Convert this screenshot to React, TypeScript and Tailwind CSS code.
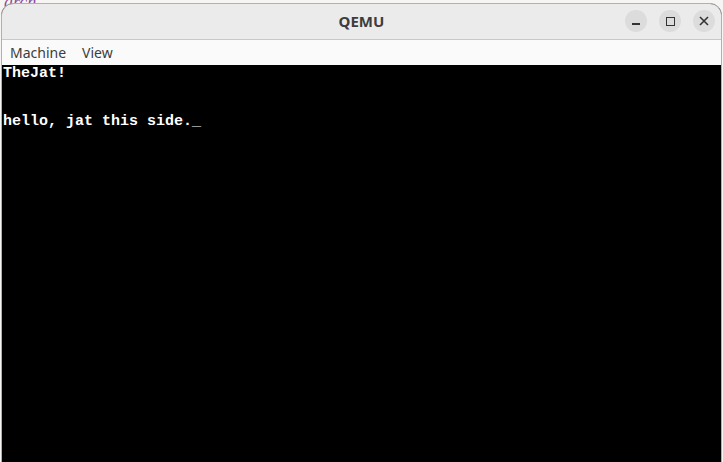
import React from "react";

export default function App() {
  return (
    <div className="relative w-[723px] h-[462px] overflow-hidden bg-[#f6f5f4]">
      <div
        className="absolute left-[4px] top-[-11px] text-[18px] italic text-[#8a4a9a]"
        style={{ fontFamily: '"Liberation Serif", serif' }}
      >
        arch
      </div>
      <div className="relative ml-[1px] mt-[3px] w-[721px] h-[470px] flex flex-col rounded-t-[12px] border border-[#b0b0b0] bg-black overflow-hidden">
        <div className="relative h-[36px] shrink-0 flex items-center justify-center bg-[#ebebeb] border-b border-[#c8c8c8]">
          <span
            className="text-[15px] font-bold text-[#3d3d3d]"
            style={{ fontFamily: '"Noto Sans", "Open Sans", sans-serif' }}
          >
            QEMU
          </span>
          <div className="absolute right-[6px] top-[6px] flex gap-[12px]">
            <div className="w-[22px] h-[22px] rounded-full bg-[#dcdcdc] flex items-center justify-center">
              <div className="w-[8px] h-[1.5px] bg-[#333] mt-[6px]" />
            </div>
            <div className="w-[22px] h-[22px] rounded-full bg-[#dcdcdc] flex items-center justify-center">
              <div className="w-[9px] h-[9px] border-[1.5px] border-[#333]" />
            </div>
            <div className="w-[22px] h-[22px] rounded-full bg-[#dcdcdc] flex items-center justify-center">
              <svg width="10" height="10" viewBox="0 0 10 10">
                <path d="M1 1 L9 9 M9 1 L1 9" stroke="#333" strokeWidth="1.6" />
              </svg>
            </div>
          </div>
        </div>
        <div
          className="h-[25px] shrink-0 flex items-center gap-[16px] pl-[8px] bg-[#fafafa] text-[14px] text-[#3d3d3d]"
          style={{ fontFamily: '"Noto Sans", "Open Sans", sans-serif' }}
        >
          <span>Machine</span>
          <span>View</span>
        </div>
        <div
          className="flex-1 bg-black text-white text-[15px] leading-[16px] font-bold pl-[1px] pt-[1px] whitespace-pre"
          style={{ fontFamily: '"Liberation Mono", monospace' }}
        >
          <div>TheJat!</div>
          <div> </div>
          <div> </div>
          <div>hello, jat this side._</div>
        </div>
      </div>
    </div>
  );
}
